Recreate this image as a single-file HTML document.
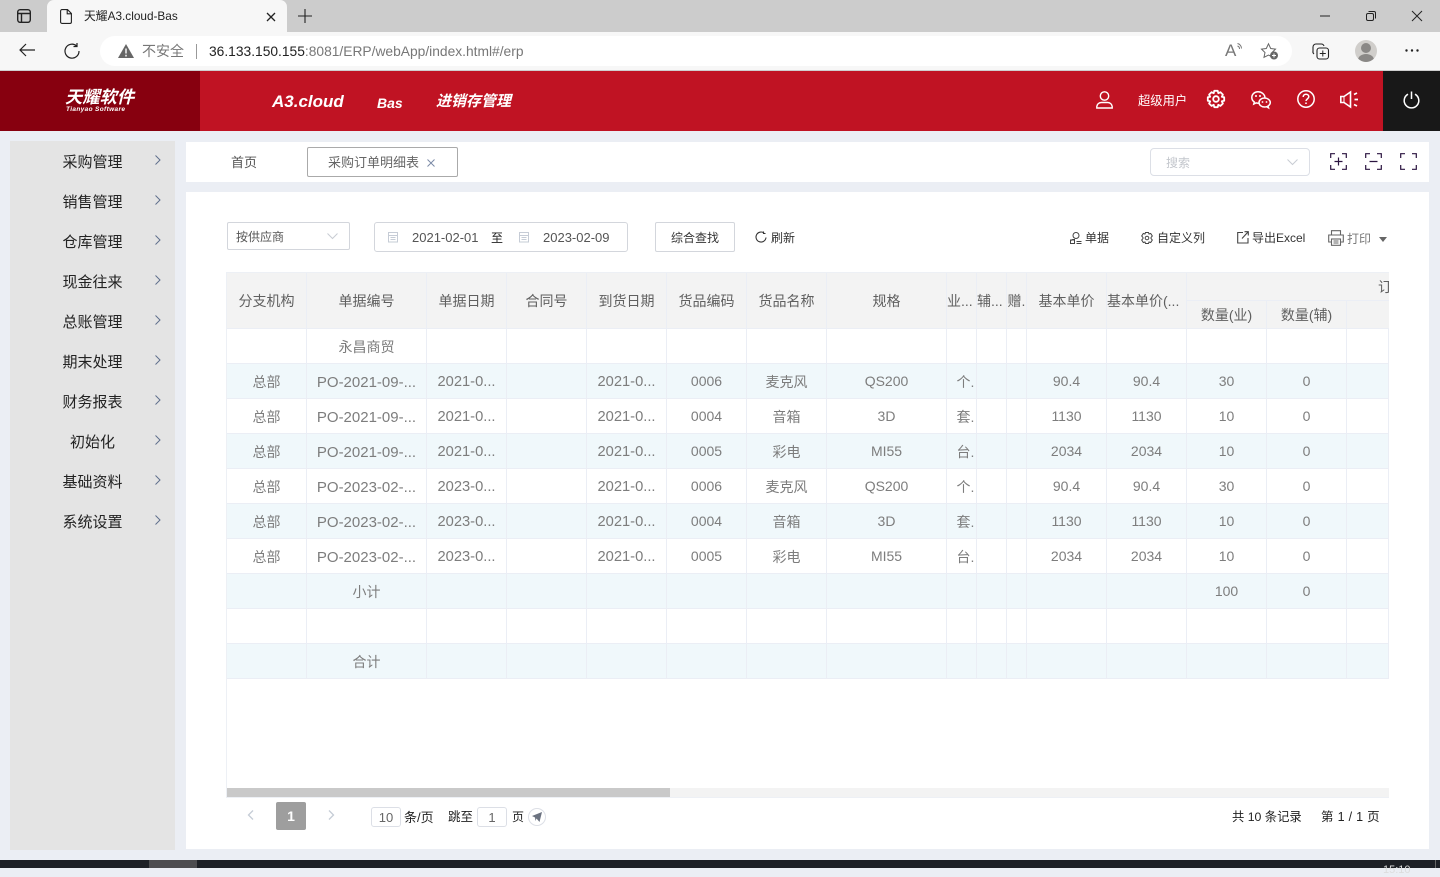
<!DOCTYPE html>
<html lang="zh"><head><meta charset="utf-8"><title>天耀A3.cloud-Bas</title>
<style>
*{box-sizing:border-box}
html,body{margin:0;padding:0;width:1440px;height:868px;overflow:hidden;background:#ebeef4;font-family:"Liberation Sans","Noto Sans CJK SC",sans-serif;font-size:13px;color:#333}
.a{position:absolute;white-space:nowrap}
svg{position:absolute;overflow:visible;fill:none}
.menu{left:10px;width:165px;height:40px;line-height:40px}
.menu span{position:absolute;left:0;top:2px;width:165px;text-align:center;font-size:15px;color:#222}
.menu svg{left:145px;top:14px}
#tb{position:absolute;left:226px;top:272px;width:1163px;height:526px;border:1px solid #edf0f5;border-right:0;overflow:hidden;background:#fff}
table{border-collapse:separate;border-spacing:0;table-layout:fixed;width:1162px;position:absolute;left:0;top:0}
th,td{border-right:1px solid #ebeef5;border-bottom:1px solid #ebeef5;padding:0;text-align:center;font-weight:400;color:#6a6a6a;font-size:14px;overflow:hidden;white-space:nowrap}
th{background:#f3f3f3;color:#5f5f5f;height:28px}
td{height:35px;font-size:14px;color:#7d7d7d}
tr.o td{background:#f0f8fb}
td.c{font-size:14px;padding-top:2px}
td.p{font-size:15px;padding-top:2px}
td.d{font-size:14.700px;padding-top:2px}
td.u{padding-left:8px;padding-top:1px}
</style></head><body>

<!-- browser chrome -->
<div class="a" style="left:0;top:0;width:1440px;height:32px;background:#cccccc"></div>
<div class="a" style="left:47px;top:0;width:240px;height:32px;background:#f7f7f7;border-radius:7px 7px 0 0"></div>
<div class="a" style="left:0;top:32px;width:1440px;height:38px;background:#f7f7f7"></div>
<div class="a" style="left:0;top:70px;width:1440px;height:1px;background:#cfcfcf"></div>
<svg style="left:17px;top:9px" width="14" height="14"><rect x=".7" y=".7" width="12.600" height="12.600" rx="2.500" stroke="#222" stroke-width="1.400"/><path d="M1 4.500H13M4.500 4.500V13" stroke="#222" stroke-width="1.400"/></svg>
<svg style="left:60px;top:9px" width="12" height="15"><path d="M.6 2A1.400 1.400 0 0 1 2 .6H7.500L11.400 4.500V13A1.400 1.400 0 0 1 10 14.400H2A1.400 1.400 0 0 1 .6 13ZM7.200 .8V4.800H11.200" stroke="#222" stroke-width="1.100"/></svg>
<div class="a" style="left:84px;top:8px;font-size:11.800px;line-height:16px;color:#222">天耀A3.cloud-Bas</div>
<svg style="left:266px;top:12px" width="10" height="10"><path d="M1 1L9 9M9 1L1 9" stroke="#222" stroke-width="1.300"/></svg>
<svg style="left:298px;top:9px" width="14" height="14"><path d="M7 0V14M0 7H14" stroke="#222" stroke-width="1.100"/></svg>
<svg style="left:1320px;top:15px" width="10" height="2"><path d="M0 1H10" stroke="#222"/></svg>
<svg style="left:1366px;top:11px" width="10" height="10"><rect x=".5" y="2.500" width="7" height="7" rx="1.500" stroke="#222"/><path d="M2.500 .5H8A1.500 1.500 0 0 1 9.500 2V7.500" stroke="#222"/></svg>
<svg style="left:1412px;top:11px" width="10" height="10"><path d="M0 0L10 10M10 0L0 10" stroke="#222"/></svg>
<svg style="left:19px;top:43px" width="16" height="14"><path d="M16 7H1M7 1L1 7L7 13" stroke="#222" stroke-width="1.200"/></svg>
<svg style="left:64px;top:43px" width="16" height="16"><path d="M12.500 2.800A7 7 0 1 0 15 8M13 0V3.500H9.500" stroke="#222" stroke-width="1.200"/></svg>
<div class="a" style="left:100px;top:36px;width:1192px;height:30px;background:#fff;border-radius:15px"></div>
<svg style="left:118px;top:44px" width="16" height="14"><path d="M8 0L16 14H0Z" fill="#666"/><path d="M8 4.500V9.500M8 10.800V12.500" stroke="#fff" stroke-width="1.400"/></svg>
<div class="a" style="left:142px;top:42px;font-size:14px;line-height:18px;color:#777">不安全</div>
<div class="a" style="left:196px;top:44px;width:1px;height:15px;background:#999"></div>
<div class="a" style="left:209px;top:43px;font-size:13.800px;line-height:18px;color:#777"><span style="color:#222">36.133.150.155</span>:8081/ERP/webApp/index.html#/erp</div>
<div class="a" style="left:1225px;top:42px;font-size:17px;line-height:18px;color:#777">A</div>
<svg style="left:1237px;top:43px" width="6" height="8"><path d="M.5 .5A5 5 0 0 1 4.500 5.500M.5 3A3 3 0 0 1 2.500 6" stroke="#777"/></svg>
<svg style="left:1261px;top:43px" width="18" height="17"><path d="M7.500 .8L9.700 5.500L14.500 6.100L11 9.500L12 14.300L7.500 12L3 14.300L4 9.500L.5 6.100L5.300 5.500Z" stroke="#666" fill="#fff"/><circle cx="13" cy="12.500" r="4" fill="#666"/><path d="M13 10.500V14.500M11 12.500H15" stroke="#fff"/></svg>
<svg style="left:1312px;top:43px" width="18" height="17"><path d="M2 11A3 3 0 0 1 1 8V4A3 3 0 0 1 4 1H9A3 3 0 0 1 12 3" stroke="#222" stroke-width="1.100"/><rect x="5" y="5" width="11.500" height="11" rx="2.500" stroke="#222" stroke-width="1.100" fill="#f7f7f7"/><path d="M10.800 7.500V13.500M7.800 10.500H13.800" stroke="#222"/></svg>
<div class="a" style="left:1355px;top:40px;width:22px;height:22px;border-radius:50%;background:#d0cecb;overflow:hidden"><div class="a" style="left:6px;top:3px;width:10px;height:10px;border-radius:50%;background:#8a8886"></div><div class="a" style="left:3px;top:14px;width:16px;height:12px;border-radius:50%;background:#8a8886"></div></div>
<svg style="left:1405px;top:49px" width="14" height="3"><circle cx="1.500" cy="1.500" r="1.200" fill="#222"/><circle cx="7" cy="1.500" r="1.200" fill="#222"/><circle cx="12.500" cy="1.500" r="1.200" fill="#222"/></svg>

<!-- app header -->
<div class="a" style="left:0;top:71px;width:1440px;height:60px;background:#c01323"></div>
<div class="a" style="left:0;top:71px;width:200px;height:60px;background:#87000f"></div>
<div class="a" style="left:1383px;top:71px;width:57px;height:60px;background:#181818"></div>
<div class="a" style="left:65px;top:87px;font-size:17.300px;line-height:20px;color:#fff;font-weight:700;font-style:italic">天耀软件</div>
<div class="a" style="left:66px;top:106px;font-size:6.500px;line-height:8px;color:#fff;font-style:italic;font-weight:700;letter-spacing:.35px">Tianyao Software</div>
<div class="a" style="left:272px;top:91px;font-size:17px;line-height:22px;color:#fff;font-weight:700;font-style:italic">A3.cloud</div>
<div class="a" style="left:377px;top:94px;font-size:14px;line-height:18px;color:#fff;font-weight:700;font-style:italic">Bas</div>
<div class="a" style="left:436px;top:92px;font-size:15px;line-height:20px;color:#fff;font-weight:700;font-style:italic">进销存管理</div>
<div class="a" style="left:1138px;top:93px;font-size:12.300px;line-height:17px;color:#fff">超级用户</div>
<svg style="left:1096px;top:91px" width="17" height="18"><circle cx="8.500" cy="5" r="4.200" stroke="#fff" stroke-width="1.400"/><path d="M.8 17V15.500A4.500 4.500 0 0 1 5.300 11.500H11.700A4.500 4.500 0 0 1 16.200 15.500V17Z" stroke="#fff" stroke-width="1.400"/></svg>
<svg style="left:1207px;top:90px" width="18" height="18"><path d="M7.300 .8H10.700L11.300 3.200L13.500 2.200L15.900 4.600L14.800 6.800L17.200 7.300V10.700L14.800 11.300L15.900 13.500L13.500 15.900L11.300 14.800L10.700 17.200H7.300L6.700 14.800L4.500 15.900L2.100 13.500L3.200 11.300L.8 10.700V7.300L3.200 6.800L2.100 4.600L4.500 2.200L6.700 3.200Z" stroke="#fff" stroke-width="1.800" stroke-linejoin="round"/><circle cx="9" cy="9" r="2.800" stroke="#fff" stroke-width="1.800"/></svg>
<svg style="left:1251px;top:91px" width="20" height="18"><path d="M14 6.500C13.500 3 10.500 .8 7 .8C3.500 .8 .8 3.300 .8 6.500C.8 8.500 1.800 10 3.300 11L2.800 13L5 11.900C5.800 12.100 6.500 12.200 7.500 12.200" stroke="#fff" stroke-width="1.500"/><path d="M13.500 7C10.500 7 8 9 8 11.500C8 14 10.500 16 13.500 16C14.200 16 15 15.900 15.600 15.700L17.500 16.800L17 15C18.300 14.200 19.300 13 19.300 11.500C19.300 9 16.500 7 13.500 7Z" stroke="#fff" stroke-width="1.500"/><circle cx="5" cy="5" r="1" fill="#fff"/><circle cx="9" cy="5" r="1" fill="#fff"/><circle cx="11.500" cy="11" r=".9" fill="#fff"/><circle cx="15.500" cy="11" r=".9" fill="#fff"/></svg>
<svg style="left:1297px;top:90px" width="18" height="18"><circle cx="9" cy="9" r="8.200" stroke="#fff" stroke-width="1.500"/><path d="M6.200 7C6.200 5.300 7.500 4.200 9 4.200C10.600 4.200 11.800 5.300 11.800 6.800C11.800 8.800 9 8.900 9 11" stroke="#fff" stroke-width="1.500"/><path d="M9 12.500V14" stroke="#fff" stroke-width="1.600"/></svg>
<svg style="left:1340px;top:91px" width="18" height="17"><path d="M.8 5.500H4L10.500 1V16L4 11.500H.8Z" stroke="#fff" stroke-width="1.600"/><path d="M4 5.500V11.500" stroke="#fff"/><path d="M14 3.500L17 2M14.500 8.500H18M14 13.500L17 15" stroke="#fff" stroke-width="1.700"/></svg>
<svg style="left:1403px;top:91px" width="17" height="17"><path d="M5 3.200A7.300 7.300 0 1 0 12 3.200" stroke="#fff" stroke-width="1.500"/><path d="M8.500 .5V8" stroke="#fff" stroke-width="1.500"/></svg>

<!-- sidebar -->
<div class="a" style="left:10px;top:141px;width:165px;height:709px;background:#e4e4e4"></div>
<div class="a menu" style="top:141px"><span>采购管理</span><svg width="6" height="10"><path d="M.5 .5L5 5L.5 9.500" stroke="#5f6f8c"/></svg></div>
<div class="a menu" style="top:181px"><span>销售管理</span><svg width="6" height="10"><path d="M.5 .5L5 5L.5 9.500" stroke="#5f6f8c"/></svg></div>
<div class="a menu" style="top:221px"><span>仓库管理</span><svg width="6" height="10"><path d="M.5 .5L5 5L.5 9.500" stroke="#5f6f8c"/></svg></div>
<div class="a menu" style="top:261px"><span>现金往来</span><svg width="6" height="10"><path d="M.5 .5L5 5L.5 9.500" stroke="#5f6f8c"/></svg></div>
<div class="a menu" style="top:301px"><span>总账管理</span><svg width="6" height="10"><path d="M.5 .5L5 5L.5 9.500" stroke="#5f6f8c"/></svg></div>
<div class="a menu" style="top:341px"><span>期末处理</span><svg width="6" height="10"><path d="M.5 .5L5 5L.5 9.500" stroke="#5f6f8c"/></svg></div>
<div class="a menu" style="top:381px"><span>财务报表</span><svg width="6" height="10"><path d="M.5 .5L5 5L.5 9.500" stroke="#5f6f8c"/></svg></div>
<div class="a menu" style="top:421px"><span>初始化</span><svg width="6" height="10"><path d="M.5 .5L5 5L.5 9.500" stroke="#5f6f8c"/></svg></div>
<div class="a menu" style="top:461px"><span>基础资料</span><svg width="6" height="10"><path d="M.5 .5L5 5L.5 9.500" stroke="#5f6f8c"/></svg></div>
<div class="a menu" style="top:501px"><span>系统设置</span><svg width="6" height="10"><path d="M.5 .5L5 5L.5 9.500" stroke="#5f6f8c"/></svg></div>

<!-- tabs -->
<div class="a" style="left:186px;top:142px;width:1243px;height:40px;background:#fff"></div>
<div class="a" style="left:231px;top:154px;font-size:13px;line-height:18px;color:#555">首页</div>
<div class="a" style="left:307px;top:147px;width:151px;height:30px;border:1px solid #aaa;border-radius:2px;background:#fff"></div>
<div class="a" style="left:328px;top:154px;font-size:13px;line-height:18px;color:#666">采购订单明细表</div>
<svg style="left:427px;top:159px" width="8" height="8"><path d="M.5 .5L7.500 7.500M7.500 .5L.5 7.500" stroke="#7b8aa6"/></svg>
<div class="a" style="left:1150px;top:148px;width:160px;height:28px;border:1px solid #dcdfe6;border-radius:4px;background:#fff"></div>
<div class="a" style="left:1166px;top:155px;font-size:12px;line-height:17px;color:#c3c6cc">搜索</div>
<svg style="left:1287px;top:159px" width="11" height="6"><path d="M.5 .5L5.500 5.500L10.500 .5" stroke="#c8ccd3"/></svg>
<svg style="left:1330px;top:153px" width="17" height="17"><path d="M5 .7H.7V5M12 .7H16.300V5M5 16.300H.7V12M12 16.300H16.300V12M8.500 4.500V12.500M4.500 8.500H12.500" stroke="#2b1440" stroke-width="1.200"/></svg>
<svg style="left:1365px;top:153px" width="17" height="17"><path d="M5 .7H.7V5M12 .7H16.300V5M5 16.300H.7V12M12 16.300H16.300V12M4.500 8.500H12.500" stroke="#2b1440" stroke-width="1.200"/></svg>
<svg style="left:1400px;top:153px" width="17" height="17"><path d="M5 .7H.7V5M12 .7H16.300V5M5 16.300H.7V12M12 16.300H16.300V12" stroke="#2b1440" stroke-width="1.200"/></svg>

<!-- main panel -->
<div class="a" style="left:186px;top:192px;width:1243px;height:657px;background:#fff"></div>

<div class="a" style="left:227px;top:222px;width:123px;height:28px;border:1px solid #d3d6dc;border-radius:2px"></div>
<div class="a" style="left:236px;top:229px;font-size:12px;line-height:17px;color:#555">按供应商</div>
<svg style="left:327px;top:233px" width="11" height="6"><path d="M.5 .5L5.500 5.500L10.500 .5" stroke="#c8ccd3"/></svg>
<div class="a" style="left:374px;top:222px;width:254px;height:30px;border:1px solid #d3d6dc;border-radius:3px"></div>
<svg style="left:387px;top:231px" width="12" height="12"><rect x="1.500" y="1.500" width="9" height="9.500" stroke="#c6ccd6"/><path d="M1.500 4.500H10.500M3.500 6.500H8.500M3.500 8.500H8.500" stroke="#c6ccd6"/></svg>
<div class="a" style="left:412px;top:229px;font-size:13px;line-height:17px;color:#555">2021-02-01</div>
<div class="a" style="left:491px;top:230px;font-size:12px;line-height:17px;color:#222">至</div>
<svg style="left:518px;top:231px" width="12" height="12"><rect x="1.500" y="1.500" width="9" height="9.500" stroke="#c6ccd6"/><path d="M1.500 4.500H10.500M3.500 6.500H8.500M3.500 8.500H8.500" stroke="#c6ccd6"/></svg>
<div class="a" style="left:543px;top:229px;font-size:13px;line-height:17px;color:#555">2023-02-09</div>
<div class="a" style="left:655px;top:222px;width:80px;height:30px;border:1px solid #d3d6dc;border-radius:2px;text-align:center;line-height:30px;font-size:12px;color:#333">综合查找</div>
<svg style="left:755px;top:231px" width="12" height="13"><path d="M9 2A5 5 0 1 0 11 6.500M8.500 .5V2.500H10.500" stroke="#333" stroke-width="1.100"/></svg>
<div class="a" style="left:771px;top:230px;font-size:12px;line-height:17px;color:#333">刷新</div>

<svg style="left:1070px;top:232px" width="12" height="12"><circle cx="6" cy="3.500" r="3" stroke="#444"/><path d="M.5 11.500V9.500C.5 8.500 2 7.500 3 7.500H5M6.500 9.500H11.500M6.500 11.500H11.500" stroke="#444"/><rect x=".5" y="8" width="4" height="3.500" stroke="#444"/></svg>
<div class="a" style="left:1085px;top:230px;font-size:12px;line-height:17px;color:#333">单据</div>
<svg style="left:1141px;top:232px" width="12" height="12"><path d="M4.500 .5H7.500L8 2L9.700 1.500L11.300 4L10 5.500V6.500L11.300 8L9.700 10.500L8 10L7.500 11.500H4.500L4 10L2.300 10.500L.7 8L2 6.500V5.500L.7 4L2.300 1.500L4 2Z" stroke="#444"/><circle cx="6" cy="6" r="1.800" stroke="#444"/></svg>
<div class="a" style="left:1157px;top:230px;font-size:12px;line-height:17px;color:#333">自定义列</div>
<svg style="left:1237px;top:231px" width="12" height="13"><path d="M6 1.500H.7V12H11V7M5 7.500L11 1M7.500 .7H11.300V4.500" stroke="#444" stroke-width="1.100"/></svg>
<div class="a" style="left:1252px;top:230px;font-size:12px;line-height:17px;color:#333">导出Excel</div>
<svg style="left:1328px;top:230px" width="16" height="16"><path d="M3.500 5V.7H12.500V5M3.500 12H.7V5H15.300V12H12.500" stroke="#666" stroke-width="1.100"/><rect x="3.500" y="9" width="9" height="6.300" stroke="#666" stroke-width="1.100"/><path d="M5.500 11H10.500M5.500 13H10.500" stroke="#666"/></svg>
<div class="a" style="left:1347px;top:231px;font-size:12px;line-height:17px;color:#777">打印</div>
<svg style="left:1379px;top:237px" width="8" height="5"><path d="M0 0H8L4 5Z" fill="#666"/></svg>

<!-- table -->
<div id="tb">
<table>
<colgroup><col style="width:80px"><col style="width:120px"><col style="width:80px"><col style="width:80px"><col style="width:80px"><col style="width:80px"><col style="width:80px"><col style="width:120px"><col style="width:30px"><col style="width:30px"><col style="width:20px"><col style="width:80px"><col style="width:80px"><col style="width:80px"><col style="width:80px"><col style="width:42px"></colgroup>
<tr><th rowspan="2">分支机构</th><th rowspan="2">单据编号</th><th rowspan="2">单据日期</th><th rowspan="2">合同号</th><th rowspan="2">到货日期</th><th rowspan="2">货品编码</th><th rowspan="2">货品名称</th><th rowspan="2">规格</th><th rowspan="2" style="text-align:left">业...</th><th rowspan="2" style="text-align:left">辅...</th><th rowspan="2">赠.</th><th rowspan="2">基本单价</th><th rowspan="2" style="text-align:left">基本单价(...</th><th colspan="3" style="text-align:right;border-right:0;padding:3px 0 0"><span style="display:inline-block;width:11px;overflow:hidden;text-align:left">订</span></th></tr>
<tr><th>数量(业)</th><th>数量(辅)</th><th style="border-right:0"></th></tr>
<tr><td></td><td class="c">永昌商贸</td><td></td><td></td><td></td><td></td><td></td><td></td><td></td><td></td><td></td><td></td><td></td><td></td><td></td><td></td></tr>
<tr class="o"><td class="c">总部</td><td class="p">PO-2021-09-...</td><td class="d">2021-0...</td><td></td><td class="d">2021-0...</td><td>0006</td><td class="c">麦克风</td><td>QS200</td><td class="u">个.</td><td></td><td></td><td>90.4</td><td>90.4</td><td>30</td><td>0</td><td></td></tr>
<tr><td class="c">总部</td><td class="p">PO-2021-09-...</td><td class="d">2021-0...</td><td></td><td class="d">2021-0...</td><td>0004</td><td class="c">音箱</td><td>3D</td><td class="u">套.</td><td></td><td></td><td>1130</td><td>1130</td><td>10</td><td>0</td><td></td></tr>
<tr class="o"><td class="c">总部</td><td class="p">PO-2021-09-...</td><td class="d">2021-0...</td><td></td><td class="d">2021-0...</td><td>0005</td><td class="c">彩电</td><td>MI55</td><td class="u">台.</td><td></td><td></td><td>2034</td><td>2034</td><td>10</td><td>0</td><td></td></tr>
<tr><td class="c">总部</td><td class="p">PO-2023-02-...</td><td class="d">2023-0...</td><td></td><td class="d">2021-0...</td><td>0006</td><td class="c">麦克风</td><td>QS200</td><td class="u">个.</td><td></td><td></td><td>90.4</td><td>90.4</td><td>30</td><td>0</td><td></td></tr>
<tr class="o"><td class="c">总部</td><td class="p">PO-2023-02-...</td><td class="d">2023-0...</td><td></td><td class="d">2021-0...</td><td>0004</td><td class="c">音箱</td><td>3D</td><td class="u">套.</td><td></td><td></td><td>1130</td><td>1130</td><td>10</td><td>0</td><td></td></tr>
<tr><td class="c">总部</td><td class="p">PO-2023-02-...</td><td class="d">2023-0...</td><td></td><td class="d">2021-0...</td><td>0005</td><td class="c">彩电</td><td>MI55</td><td class="u">台.</td><td></td><td></td><td>2034</td><td>2034</td><td>10</td><td>0</td><td></td></tr>
<tr class="o"><td></td><td class="c">小计</td><td></td><td></td><td></td><td></td><td></td><td></td><td></td><td></td><td></td><td></td><td></td><td>100</td><td>0</td><td></td></tr>
<tr><td></td><td></td><td></td><td></td><td></td><td></td><td></td><td></td><td></td><td></td><td></td><td></td><td></td><td></td><td></td><td></td></tr>
<tr class="o"><td></td><td class="c">合计</td><td></td><td></td><td></td><td></td><td></td><td></td><td></td><td></td><td></td><td></td><td></td><td></td><td></td><td></td></tr>
</table>
<div class="a" style="left:0;top:515px;width:1162px;height:9px;background:#f3f3f3"></div>
<div class="a" style="left:0;top:515px;width:443px;height:9px;background:#c9c9c9"></div>
</div>

<!-- pagination -->
<svg style="left:247px;top:810px" width="7" height="10"><path d="M6 .5L1.500 5L6 9.500" stroke="#c5ccd6" stroke-width="1.300"/></svg>
<div class="a" style="left:276px;top:802px;width:30px;height:28px;background:#9e9e9e;border-radius:2px;text-align:center;line-height:28px;color:#fff;font-weight:700;font-size:14px">1</div>
<svg style="left:328px;top:810px" width="7" height="10"><path d="M1 .5L5.500 5L1 9.500" stroke="#c5ccd6" stroke-width="1.300"/></svg>
<div class="a" style="left:371px;top:807px;width:30px;height:20px;border:1px solid #dcdfe6;border-radius:3px;text-align:center;line-height:19px;font-size:13px;color:#666">10</div>
<div class="a" style="left:404px;top:809px;font-size:13px;line-height:17px;color:#222">条/页</div>
<div class="a" style="left:448px;top:809px;font-size:12.500px;line-height:17px;color:#222">跳至</div>
<div class="a" style="left:477px;top:807px;width:30px;height:20px;border:1px solid #dcdfe6;border-radius:3px;text-align:center;line-height:19px;font-size:13px;color:#666">1</div>
<div class="a" style="left:512px;top:809px;font-size:12px;line-height:17px;color:#222">页</div>
<div class="a" style="left:528px;top:808px;width:18px;height:18px;border:1px solid #dcdfe6;border-radius:50%"></div>
<svg style="left:532px;top:812px" width="10" height="10"><path d="M0 4L10 0L7.500 10L4.500 6.500L3.500 9L3 5.500Z" fill="#6b7280"/></svg>
<div class="a" style="left:1232px;top:809px;font-size:12.300px;line-height:17px;color:#222">共 10 条记录</div>
<div class="a" style="left:1321px;top:809px;font-size:12.500px;line-height:17px;letter-spacing:.3px;color:#222">第 1 / 1 页</div>

<!-- taskbar -->
<div class="a" style="left:0;top:860px;width:1440px;height:8px;background:#1d2026"></div>
<div class="a" style="left:149px;top:860px;width:48px;height:8px;background:#4d4d50"></div>
<div class="a" style="left:1383px;top:863px;font-size:11px;line-height:14px;color:#ddd">15:10</div>
<div class="a" style="left:1435px;top:860px;width:1px;height:8px;background:#666"></div>
</body></html>
